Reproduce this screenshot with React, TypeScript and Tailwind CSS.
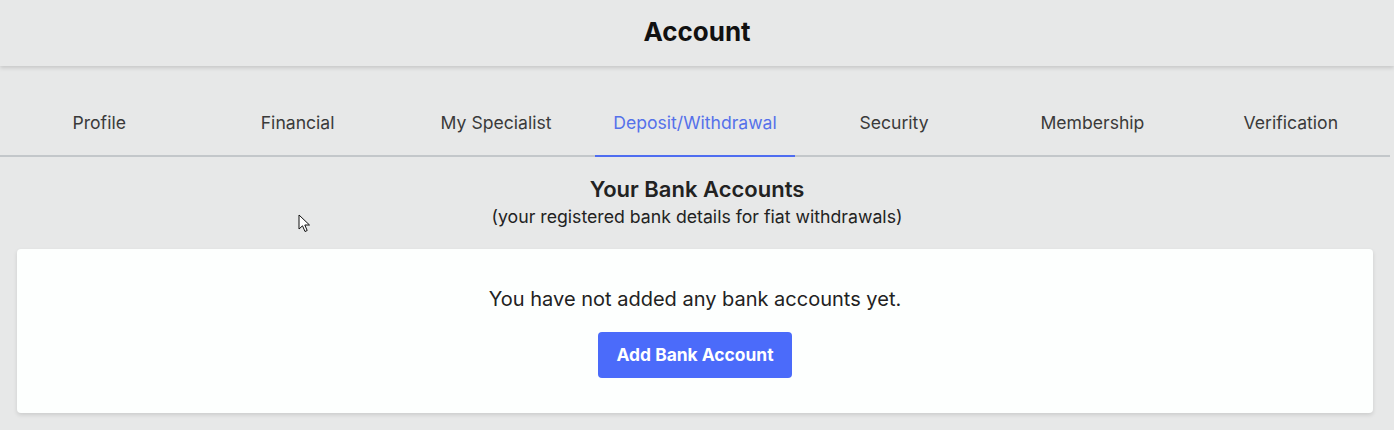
const tabs = [
  "Profile",
  "Financial",
  "My Specialist",
  "Deposit/Withdrawal",
  "Security",
  "Membership",
  "Verification",
];

function Cursor() {
  return (
    <svg
      className="absolute left-[298px] top-[214px]"
      width="14"
      height="20"
      viewBox="0 0 14 20"
    >
      <path
        d="M1 1 L1 15 L4.5 11.8 L7 17.5 L9.2 16.5 L6.8 11 L11.5 11 Z"
        fill="#fff"
        stroke="#111"
        strokeWidth="1"
        strokeLinejoin="round"
      />
    </svg>
  );
}

export default function App() {
  const active = "Deposit/Withdrawal";
  return (
    <div className="relative min-h-[430px] bg-[#e7e8e8] font-['Inter',sans-serif] text-[#222]">
      <header className="flex h-[66px] items-center justify-center shadow-[0_2px_4px_rgba(0,0,0,0.14)]">
        <h1 className="-mt-[2px] text-[26px] leading-[32px] font-bold text-[#111]">Account</h1>
      </header>

      <nav className="mt-[25px] mr-1 flex border-b-2 border-[#c3c7ca]">
        {tabs.map((t) => (
          <div key={t} className="flex flex-1 justify-center">
            <div
              className={
                t === active
                  ? "-mb-[2px] border-b-2 border-[#4f6df0] px-[18px] py-5 text-[17.6px] leading-[24px] text-[#5571ea]"
                  : "-mb-[2px] px-[18px] py-5 text-[17.6px] leading-[24px] text-[#3a3a3a]"
              }
            >
              {t}
            </div>
          </div>
        ))}
      </nav>

      <section className="flex flex-col items-center pt-[18px]">
        <h2 className="text-[22px] leading-[28px] font-semibold text-[#222]">Your Bank Accounts</h2>
        <p className="mt-[2px] text-[17.7px] leading-[24px] text-[#222]">
          (your registered bank details for fiat withdrawals)
        </p>
      </section>

      <div className="mx-[17px] mt-[20px] mr-[21px] flex flex-col items-center rounded-sm bg-[#fdfffe] pt-[36px] pb-[35px] shadow-[0_2px_4px_rgba(0,0,0,0.12)]">
        <p className="text-[20px] leading-[28px] text-[#222]">You have not added any bank accounts yet.</p>
        <button className="mt-[19px] h-[46px] w-[194px] rounded-[4px] bg-[#4b6bfa] text-[17.4px] font-bold text-white">
          Add Bank Account
        </button>
      </div>

      <Cursor />
    </div>
  );
}
